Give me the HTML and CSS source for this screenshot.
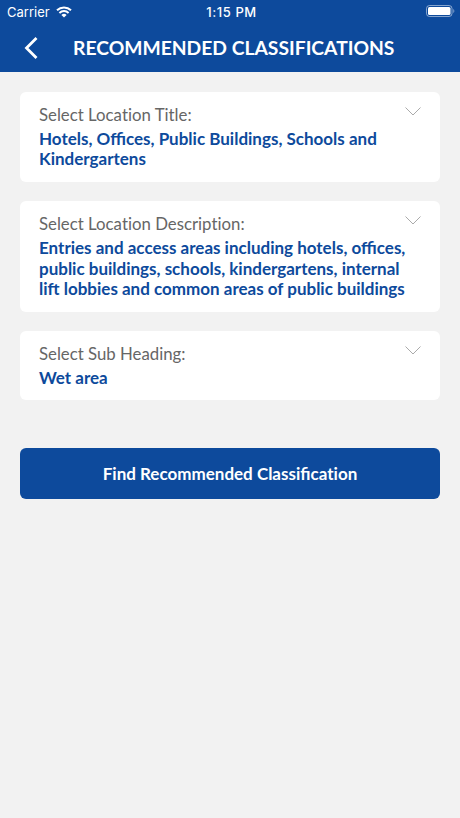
FILE: index.html
```html
<!DOCTYPE html>
<html lang="en">
<head>
    <meta charset="UTF-8">
    <meta name="viewport" content="width=device-width, initial-scale=1.0">
    <title>Recommended Classifications</title>
    <link rel="stylesheet" href="styles.css">
</head>
<body>
    <header class="header">
        <div class="status-bar">
            <div class="carrier">
                <span>Carrier</span>
                <svg class="wifi" width="16" height="12" viewBox="0 0 16 12">
                    <path d="M1 4.200a10.200 10.200 0 0 1 14 0M3.400 6.900a6.800 6.800 0 0 1 9.200 0" fill="none" stroke="#fff" stroke-width="2"/>
                    <path d="M8 11.600L5.400 9a3.800 3.800 0 0 1 5.200 0z" fill="#fff"/>
                </svg>
            </div>
            <span class="time">1:15 PM</span>
            <svg class="battery" width="29" height="12" viewBox="0 0 29 12">
                <rect x="0.5" y="0.5" width="25.500" height="11" rx="3" fill="none" stroke="#fff" stroke-opacity="0.5"/>
                <rect x="2" y="2" width="22.500" height="8" rx="1.500" fill="#fff"/>
                <path d="M27.300 4v4c1.400-.6 1.400-3.400 0-4z" fill="#fff" fill-opacity="0.5"/>
            </svg>
        </div>
        <div class="nav-bar">
            <svg class="back" width="14" height="22" viewBox="0 0 14 22">
                <path d="M12.500 1L2.500 11l10 10" fill="none" stroke="#fff" stroke-width="2.800"/>
            </svg>
            <h1>RECOMMENDED CLASSIFICATIONS</h1>
        </div>
    </header>

    <main class="content">
        <div class="card">
            <div class="label">Select Loca<span class="plain">ti</span>on Title:</div>
            <div class="value">Hotels, Offices, Public Buildings, Schools and Kindergartens</div>
            <svg class="chevron" width="16" height="9" viewBox="0 0 16 9"><path d="M.5.500L8 8l7.500-7.500"/></svg>
        </div>
        <div class="card">
            <div class="label">Select Loca<span class="plain">ti</span>on Descrip<span class="plain">ti</span>on:</div>
            <div class="value">Entries and access areas including hotels, offices, public buildings, schools, kindergartens, internal lift lobbies and common areas of public buildings</div>
            <svg class="chevron" width="16" height="9" viewBox="0 0 16 9"><path d="M.5.500L8 8l7.500-7.500"/></svg>
        </div>
        <div class="card">
            <div class="label">Select Sub Heading:</div>
            <div class="value">Wet area</div>
            <svg class="chevron" width="16" height="9" viewBox="0 0 16 9"><path d="M.5.500L8 8l7.500-7.500"/></svg>
        </div>
        <button class="find-button">Find Recommended Classifica<span class="plain">ti</span>on</button>
    </main>
</body>
</html>
```
FILE: styles.css
```css
* {
    box-sizing: border-box;
}

body {
    margin: 0;
    min-height: 100vh;
    background-color: #f2f2f2;
    font-family: Lato, sans-serif;
}

.header {
    height: 72px;
    background-color: #0d4a9c;
    color: #fff;
}

.status-bar {
    display: grid;
    grid-template-columns: 1fr auto 1fr;
    align-items: center;
    height: 24px;
    padding: 0 5px 0 7px;
    font-family: Inter, sans-serif;
    font-size: 13px;
}

.carrier {
    display: flex;
    align-items: center;
    gap: 6px;
}

.wifi {
    margin-bottom: 1px;
}

.time {
    padding-left: 1px;
    font-weight: 500;
    letter-spacing: 0.6px;
}

.battery {
    justify-self: end;
    margin-bottom: 2px;
}

.nav-bar {
    display: flex;
    align-items: center;
    height: 48px;
    padding-left: 24px;
}

h1 {
    margin: 0 0 0 35px;
    font-size: 19.3px;
    font-weight: 700;
    line-height: 24px;
    white-space: nowrap;
    padding-bottom: 1px;
}

.content {
    padding: 20px;
}

.card {
    position: relative;
    margin-bottom: 19.5px;
    padding: 12px 32px 12px 19px;
    border-radius: 6px;
    background-color: #fff;
}

.label {
    margin-bottom: 4px;
    color: #666;
    font-size: 16.8px;
    line-height: 21px;
}

.plain {
    font-variant-ligatures: none;
}

.value {
    color: #0d4a9c;
    font-size: 17px;
    font-weight: 700;
    line-height: 20.4px;
}

.chevron {
    position: absolute;
    top: 15px;
    right: 19px;
    fill: none;
    stroke: #aaa;
}

.find-button {
    display: block;
    width: 100%;
    height: 51px;
    margin-top: 48px;
    border: none;
    border-radius: 6px;
    background-color: #0d4a9c;
    color: #fff;
    font-family: inherit;
    font-size: 17px;
    font-weight: 700;
}
```
